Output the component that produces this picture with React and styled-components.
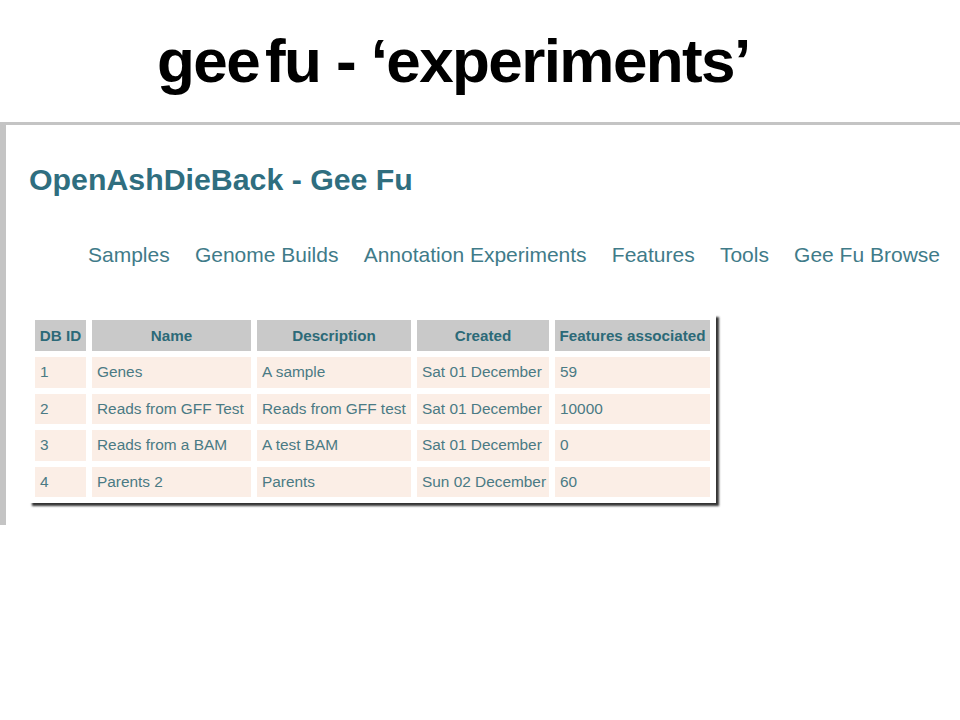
import React from "react";
import styled, { createGlobalStyle } from "styled-components";

const GlobalStyle = createGlobalStyle`
  html, body {
    margin: 0;
    padding: 0;
    background: #ffffff;
  }
  body {
    font-family: "Liberation Sans", Arial, sans-serif;
  }
`;

const Page = styled.div`
  width: 960px;
  height: 720px;
  overflow: hidden;
  background: #ffffff;
`;

const SlideTitle = styled.h1`
  margin: 0;
  padding: 31px 0 0 157px;
  font-family: "Liberation Sans", Arial, sans-serif;
  font-weight: bold;
  font-size: 62px;
  line-height: 60px;
  letter-spacing: -1.6px;
  color: #000000;
  white-space: nowrap;
`;

const Gap = styled.span`
  display: inline-block;
  width: 6px;
`;

const Shot = styled.div`
  margin-top: 31px;
  height: 400px;
  border-top: 3px solid #c4c4c4;
  border-left: 6px solid #c4c4c4;
  background: #ffffff;
`;

const SiteTitle = styled.h2`
  margin: 37px 0 0 23px;
  font-size: 30.3px;
  line-height: 36px;
  font-weight: bold;
  color: #2f6e7f;
`;

const Nav = styled.nav`
  display: flex;
  gap: 25.2px;
  margin: 45px 0 0 82px;
  font-size: 21px;
  line-height: 24px;
  color: #3f7b89;
  white-space: nowrap;
`;

const NavLink = styled.a`
  color: inherit;
  text-decoration: none;
`;

const Table = styled.table`
  margin: 47px 0 0 23px;
  table-layout: fixed;
  border-collapse: separate;
  border-spacing: 6px;
  background: #ffffff;
  box-shadow: 3px 3px 2px rgba(30, 30, 30, 0.9);
`;

const Th = styled.th`
  height: 31px;
  padding: 0 2px;
  background: #c9c9c9;
  color: #2c6a78;
  font-size: 15.2px;
  font-weight: bold;
  text-align: center;
  white-space: nowrap;
  width: ${(p) => p.$w}px;
  box-sizing: border-box;
`;

const Td = styled.td`
  height: 30.6px;
  padding: 0 0 0 5px;
  background: #fbeee6;
  color: #4a7a84;
  font-size: 15.4px;
  text-align: left;
  white-space: nowrap;
  overflow: visible;
`;

const columns = [
  { label: "DB ID", w: 51 },
  { label: "Name", w: 159 },
  { label: "Description", w: 154 },
  { label: "Created", w: 132 },
  { label: "Features associated", w: 155 },
];

const rows = [
  ["1", "Genes", "A sample", "Sat 01 December", "59"],
  ["2", "Reads from GFF Test", "Reads from GFF test", "Sat 01 December", "10000"],
  ["3", "Reads from a BAM", "A test BAM", "Sat 01 December", "0"],
  ["4", "Parents 2", "Parents", "Sun 02 December", "60"],
];

const links = [
  "Samples",
  "Genome Builds",
  "Annotation Experiments",
  "Features",
  "Tools",
  "Gee Fu Browse",
];

export default function App() {
  return (
    <Page>
      <GlobalStyle />
      <SlideTitle>
        gee<Gap />fu - ‘experiments’
      </SlideTitle>
      <Shot>
        <SiteTitle>OpenAshDieBack - Gee Fu</SiteTitle>
        <Nav>
          {links.map((l) => (
            <NavLink key={l} href="#">
              {l}
            </NavLink>
          ))}
        </Nav>
        <Table>
          <thead>
            <tr>
              {columns.map((c) => (
                <Th key={c.label} $w={c.w}>
                  {c.label}
                </Th>
              ))}
            </tr>
          </thead>
          <tbody>
            {rows.map((r) => (
              <tr key={r[0]}>
                {r.map((cell, i) => (
                  <Td key={i}>{cell}</Td>
                ))}
              </tr>
            ))}
          </tbody>
        </Table>
      </Shot>
    </Page>
  );
}
